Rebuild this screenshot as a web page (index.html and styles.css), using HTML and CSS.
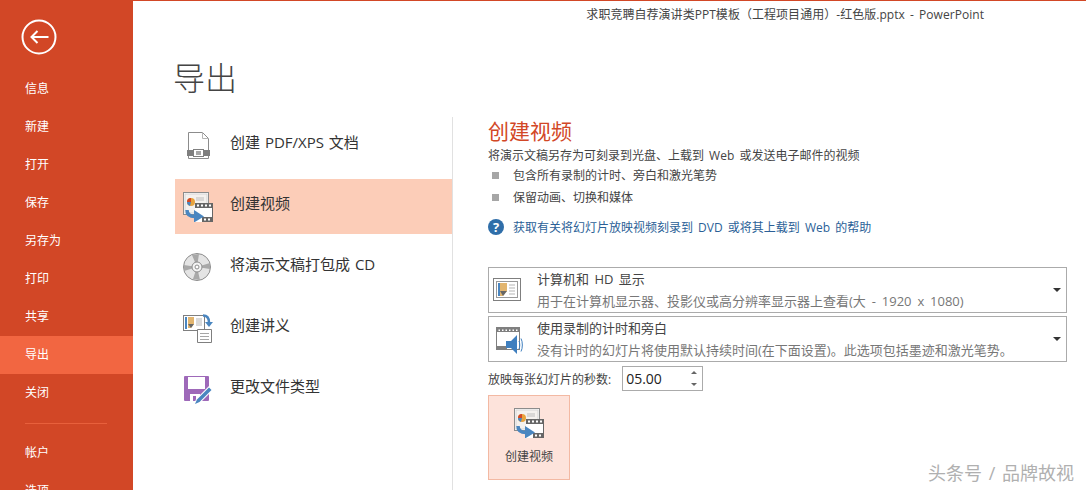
FILE: index.html
```html
<!DOCTYPE html>
<html lang="zh-CN">
<head>
    <meta charset="UTF-8">
    <title>导出 - PowerPoint</title>
    <link rel="stylesheet" href="styles.css">
</head>
<body>
    <svg class="icon-defs" width="0" height="0">
        <symbol id="video-icon" viewBox="0 0 30 30">
            <rect x="0.5" y="0.5" width="25" height="22" fill="#fff" stroke="#8c8c8c"/>
            <rect x="2" y="2" width="22" height="19" fill="#f4f1ee" stroke="#d5d5d5"/>
            <circle cx="8" cy="10" r="4" fill="#e8a33d"/>
            <path d="M8 10V6a4 4 0 0 0-4 4z" fill="#d24726"/>
            <path d="M8 10H4a4 4 0 0 0 3 3.9z" fill="#4a86c0"/>
            <path d="M13 6h8M13 8h8" stroke="#bdbdbd"/>
            <rect x="12" y="11" width="18" height="19" fill="#fff"/>
            <rect x="12" y="11" width="18" height="5" fill="#666"/>
            <rect x="19" y="25" width="11" height="5" fill="#666"/>
            <rect x="29" y="11" width="1" height="19" fill="#666"/>
            <path d="M14 12.5h2v2h-2zM18 12.5h2v2h-2zM22 12.5h2v2h-2zM26 12.5h2v2h-2zM21 26.5h2v2h-2zM25 26.5h2v2h-2z" fill="#fff"/>
            <path d="M4 18c0 4.500 3 6.500 8 6.500" fill="none" stroke="#4a86c0" stroke-width="3.500"/>
            <path d="M11 18l10 6.500-10 6z" fill="#4a86c0"/>
        </symbol>
    </svg>

    <div class="app">
        <aside class="sidebar">
            <button class="back-btn">
                <svg width="36" height="36" viewBox="0 0 36 36" fill="none" stroke="#fff">
                    <circle cx="18" cy="18" r="16.5" stroke-width="2"/>
                    <path d="M27.500 18H10.500M16.500 12l-6 6 6 6" stroke-width="2"/>
                </svg>
            </button>
            <nav class="nav">
                <a class="nav-item">信息</a>
                <a class="nav-item">新建</a>
                <a class="nav-item">打开</a>
                <a class="nav-item">保存</a>
                <a class="nav-item">另存为</a>
                <a class="nav-item">打印</a>
                <a class="nav-item">共享</a>
                <a class="nav-item active">导出</a>
                <a class="nav-item">关闭</a>
                <div class="nav-divider"></div>
                <a class="nav-item">帐户</a>
                <a class="nav-item">选项</a>
            </nav>
        </aside>

        <main class="main">
            <div class="titlebar">求职竞聘自荐演讲类PPT模板（工程项目通用）-红色版.pptx - PowerPoint</div>
            <h1 class="page-title">导出</h1>

            <div class="columns">
                <div class="export-list">
                    <div class="export-item">
                        <svg class="export-icon" viewBox="0 0 30 30" fill="none">
                            <path d="M5.5 1.500h14l6 6v20h-20z" fill="#fff" stroke="#8c8c8c"/>
                            <path d="M19.500 1.500v6h6" stroke="#b5b5b5"/>
                            <rect x="4" y="19" width="6" height="6" fill="#7f7f7f"/>
                            <rect x="21" y="19" width="6" height="6" fill="#7f7f7f"/>
                            <rect x="10.500" y="18.500" width="10" height="7" fill="#fff" stroke="#7f7f7f"/>
                            <rect x="13" y="20" width="5" height="4" fill="#a6a6a6"/>
                        </svg>
                        <span>创建 PDF/XPS 文档</span>
                    </div>
                    <div class="export-item selected">
                        <svg class="export-icon"><use href="#video-icon"/></svg>
                        <span>创建视频</span>
                    </div>
                    <div class="export-item">
                        <svg class="export-icon" viewBox="0 0 30 30">
                            <circle cx="14" cy="14" r="13.500" fill="#e4e4e4" stroke="#8c8c8c"/>
                            <path d="M14 14L9 2l7-1zM14 14l13-4 0 6zM14 14l3 13-7-1zM14 14L1 18l0-6z" fill="#a8a8a8"/>
                            <circle cx="14" cy="14" r="5" fill="#f4f4f4" stroke="#8c8c8c"/>
                            <circle cx="14" cy="14" r="2" fill="#fff" stroke="#8c8c8c"/>
                        </svg>
                        <span>将演示文稿打包成 CD</span>
                    </div>
                    <div class="export-item">
                        <svg class="export-icon" viewBox="0 0 30 30" fill="none">
                            <rect x="0.500" y="1.500" width="21" height="15" fill="#fff" stroke="#7f7f7f"/>
                            <rect x="2" y="3" width="2" height="12" fill="#4a86c0"/>
                            <path d="M5 3h6v7l-3 4H5z" fill="#e2b56f"/>
                            <path d="M5 10h6l-3 4z" fill="#666"/>
                            <path d="M13 5h6M13 7h6M13 9h6M13 11h6" stroke="#b5b5b5"/>
                            <path d="M20 1.500c4.500 0 6 3 6 7" stroke="#4a86c0" stroke-width="2.500"/>
                            <path d="M22 8h8l-4 5z" fill="#4a86c0"/>
                            <path d="M14.500 15.500h14v13h-14z" fill="#fff" stroke="#7f7f7f"/>
                            <path d="M17 19.500h9M17 22.500h9M17 25.500h9" stroke="#a6a6a6"/>
                        </svg>
                        <span>创建讲义</span>
                    </div>
                    <div class="export-item">
                        <svg class="export-icon" viewBox="0 0 30 30">
                            <rect x="1" y="1" width="25" height="25" rx="1" fill="#9e69b9"/>
                            <rect x="5" y="2" width="17" height="12" fill="#fff"/>
                            <rect x="7" y="19" width="10" height="7" fill="#fff"/>
                            <rect x="10" y="21" width="3" height="5" fill="#9e69b9"/>
                            <path d="M11 30l2-6L26 11l4 4-13 13z" fill="#fff"/>
                            <path d="M12 29l2-4.500 12-12 2.500 2.500-12 12z" fill="#4a86c0"/>
                        </svg>
                        <span>更改文件类型</span>
                    </div>
                </div>

                <section class="detail">
                    <h2 class="detail-title">创建视频</h2>
                    <p class="detail-desc">将演示文稿另存为可刻录到光盘、上载到 Web 或发送电子邮件的视频</p>
                    <ul class="bullets">
                        <li>包含所有录制的计时、旁白和激光笔势</li>
                        <li>保留动画、切换和媒体</li>
                    </ul>
                    <div class="help-row">
                        <svg class="help-icon" width="16" height="16" viewBox="0 0 16 16">
                            <circle cx="8" cy="8" r="8" fill="#2f6ea9"/>
                            <text x="8" y="12.500" class="help-mark">?</text>
                        </svg>
                        <a class="help-link">获取有关将幻灯片放映视频刻录到 DVD 或将其上载到 Web 的帮助</a>
                    </div>

                    <div class="dropdown first">
                        <svg class="dropdown-icon" viewBox="0 -3 30 30" fill="none">
                            <rect x="0.500" y="0.500" width="27" height="22" stroke="#7f7f7f"/>
                            <rect x="3.500" y="3.500" width="21" height="16" fill="#fff" stroke="#9a9a9a"/>
                            <rect x="5" y="5" width="2" height="13" fill="#4a86c0"/>
                            <path d="M7 5h7v8l-4 5H7z" fill="#e2b56f"/>
                            <path d="M7 13h7l-4 5z" fill="#666"/>
                            <path d="M16 7h6M16 10h6M16 13h6M16 16h6" stroke="#b5b5b5"/>
                        </svg>
                        <div class="dropdown-text">
                            <div class="dropdown-main">计算机和 HD 显示</div>
                            <div class="dropdown-sub spaced">用于在计算机显示器、投影仪或高分辨率显示器上查看(大 - 1920 x 1080)</div>
                        </div>
                        <span class="caret"></span>
                    </div>
                    <div class="dropdown">
                        <svg class="dropdown-icon" viewBox="0 0 30 30" fill="none">
                            <rect x="3.500" y="3.500" width="23" height="22" fill="#fff" stroke="#7f7f7f"/>
                            <path d="M4 4h22v4H4zM4 22h10v3H4z" fill="#7f7f7f"/>
                            <path d="M5.500 5.500h1.500v1.500H5.500zM9 5.500h1.500v1.500H9zM12.500 5.500h1.500v1.500h-1.500zM16 5.500h1.500v1.500H16zM19.500 5.500h1.500v1.500h-1.500zM23 5.500h1.500v1.500H23z" fill="#fff"/>
                            <path d="M13 17h5l6-6v19l-6-6h-5z" fill="#3f7fbf"/>
                            <path d="M26 17c1 2 1 6 0 8M28 14.500c1.800 3 1.800 10 0 13" stroke="#3f7fbf"/>
                        </svg>
                        <div class="dropdown-text">
                            <div class="dropdown-main">使用录制的计时和旁白</div>
                            <div class="dropdown-sub">没有计时的幻灯片将使用默认持续时间(在下面设置)。此选项包括墨迹和激光笔势。</div>
                        </div>
                        <span class="caret"></span>
                    </div>

                    <div class="seconds-row">
                        <label class="seconds-label">放映每张幻灯片的秒数:</label>
                        <div class="spinner">
                            <span class="spinner-value">05.00</span>
                            <div class="spinner-arrows">
                                <span class="arrow-up"></span>
                                <span class="arrow-down"></span>
                            </div>
                        </div>
                    </div>

                    <button class="create-btn">
                        <svg class="create-icon"><use href="#video-icon"/></svg>
                        <span>创建视频</span>
                    </button>
                </section>
            </div>
        </main>
    </div>

    <div class="watermark">头条号 / 品牌故视</div>
</body>
</html>
```

FILE: styles.css
```css
* {
    box-sizing: border-box;
}
html, body {
    margin: 0;
    height: 490px;
    overflow: hidden;
}
body {
    position: relative;
    font-family: "Open Sans", "Noto Sans CJK SC", sans-serif;
    font-size: 12px;
    word-spacing: 2px;
    color: #444;
    background: #fff;
}
.icon-defs {
    display: block;
    height: 0;
}
.app {
    display: flex;
    height: 490px;
}

/* left orange bar */
.sidebar {
    flex: none;
    width: 133px;
    background: #d24726;
    color: #fff;
}
.back-btn {
    display: block;
    width: 36px;
    height: 36px;
    margin: 19px 0 0 21px;
    padding: 0;
    border: none;
    background: none;
}
.nav {
    margin-top: 15px;
}
.nav-item {
    display: block;
    height: 38px;
    padding-left: 25px;
    line-height: 38px;
    font-size: 12px;
}
.nav-item.active {
    background: #f26641;
}
.nav-divider {
    height: 1px;
    margin: 11px 26px 10px 25px;
    background: #e8603c;
}

/* main area */
.main {
    flex: 1;
    min-width: 0;
    border-top: 1px solid #d24726;
}
.titlebar {
    height: 28px;
    padding-right: 102px;
    line-height: 28px;
    text-align: right;
    white-space: nowrap;
    font-size: 12px;
    letter-spacing: 0.04px;
    color: #444;
}
.page-title {
    height: 88px;
    margin: 0;
    padding: 27px 0 0 40px;
    font-size: 32px;
    font-weight: 300;
    line-height: 44px;
    color: #444;
}
.columns {
    display: flex;
}
.export-list {
    flex: none;
    width: 278px;
    height: 373px;
    margin-left: 42px;
    border-right: 1px solid #e1e1e1;
    padding-top: 1px;
}
.export-item {
    display: flex;
    align-items: flex-start;
    gap: 17px;
    height: 55px;
    margin-bottom: 6px;
    padding: 13px 0 0 8px;
    font-size: 15px;
    line-height: 22px;
    word-spacing: 1px;
    color: #333;
}
.export-item.selected {
    background: #fccdb8;
}
.export-icon {
    flex: none;
    width: 30px;
    height: 30px;
}

/* right detail pane */
.detail {
    flex: none;
    width: 579px;
    margin-left: 35px;
}
.detail-title {
    margin: 0;
    height: 27px;
    font-size: 21px;
    font-weight: 400;
    line-height: 28px;
    color: #d24726;
}
.detail-desc {
    margin: 2px 0 0;
    line-height: 19px;
    color: #444;
}
.bullets {
    margin: 0;
    padding: 0;
    list-style: none;
}
.bullets li {
    position: relative;
    height: 22px;
    padding-left: 25px;
    line-height: 22px;
}
.bullets li::before {
    content: "";
    position: absolute;
    left: 4px;
    top: 7px;
    width: 7px;
    height: 7px;
    background: #a6a6a6;
}
.help-row {
    display: flex;
    align-items: center;
    gap: 9px;
    margin-top: 8px;
    height: 20px;
    color: #2b5f97;
}
.help-mark {
    font-size: 13px;
    font-weight: 700;
    fill: #fff;
    text-anchor: middle;
}
.dropdown {
    display: flex;
    align-items: center;
    height: 46px;
    margin-bottom: 3px;
    border: 1px solid #ababab;
    padding: 0 5px 0 4px;
}
.dropdown.first {
    margin-top: 30px;
}
.dropdown-icon {
    flex: none;
    width: 30px;
    height: 30px;
}
.dropdown-text {
    flex: 1;
    margin-left: 14px;
    font-size: 13px;
}
.dropdown-main {
    line-height: 22px;
    color: #444;
}
.dropdown-sub {
    line-height: 22px;
    word-spacing: 0;
    color: #777;
}
.dropdown-sub.spaced {
    word-spacing: 2.5px;
}
.caret {
    flex: none;
    border-top: 4px solid #333;
    border-left: 4px solid transparent;
    border-right: 4px solid transparent;
}
.seconds-row {
    display: flex;
    align-items: center;
    gap: 11px;
    margin-top: 4px;
}
.seconds-label {
    word-spacing: 0;
}
.spinner {
    display: flex;
    align-items: center;
    justify-content: space-between;
    width: 81px;
    height: 25px;
    border: 1px solid #ababab;
    padding: 0 5px 0 3px;
}
.spinner-value {
    font-size: 14px;
    color: #222;
}
.spinner-arrows {
    display: flex;
    flex-direction: column;
    gap: 9px;
}
.arrow-up {
    border-bottom: 3px solid #666;
    border-left: 3.5px solid transparent;
    border-right: 3.5px solid transparent;
}
.arrow-down {
    border-top: 3px solid #666;
    border-left: 3.5px solid transparent;
    border-right: 3.5px solid transparent;
}
.create-btn {
    display: flex;
    flex-direction: column;
    align-items: center;
    width: 82px;
    height: 85px;
    margin-top: 4px;
    padding: 12px 0 0;
    border: 1px solid #f3b9a3;
    background: #fde3db;
    font: inherit;
    color: #444;
}
.create-icon {
    width: 30px;
    height: 30px;
}
.create-btn span {
    margin-top: 9px;
}

.watermark {
    position: absolute;
    right: 12px;
    bottom: 5px;
    font-size: 18px;
    color: #b0b0b0;
}
```
